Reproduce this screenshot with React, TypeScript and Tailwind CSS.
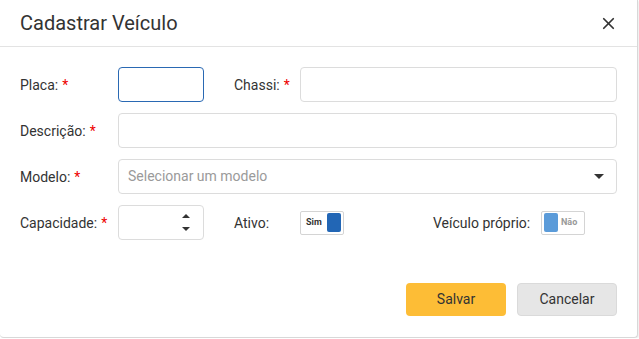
import { X } from "lucide-react";

function Label({ text, required }: { text: string; required?: boolean }) {
  return (
    <span className="text-[14px] text-[#333]">
      {text}
      {required && <span className="ml-1 text-[#e00]">*</span>}
    </span>
  );
}

function Toggle({ on, text }: { on: boolean; text: string }) {
  return (
    <div className="flex h-6 w-11 items-center rounded-[2px] border border-[#d4d4d4] bg-white px-[2px]">
      {on ? (
        <>
          <span className="flex-1 pl-[3px] text-[9px] font-bold text-[#333]">{text}</span>
          <span className="h-[19px] w-[14px] rounded-[2px] bg-[#2266b5]" />
        </>
      ) : (
        <>
          <span className="h-[19px] w-[14px] rounded-[2px] bg-[#5b9bd9]" />
          <span className="flex-1 pl-[3px] text-[9px] font-bold text-[#999]">{text}</span>
        </>
      )}
    </div>
  );
}

const base = "h-[35px] rounded-[4px] border bg-white";
const input = `${base} border-[#dcdcdc]`;

export default function App() {
  return (
    <div className="bg-white font-['Roboto',sans-serif]">
      <div className="w-[638px] h-[338px] rounded-b-[4px] border-r border-b border-[#d8d8d8] bg-white shadow-[1px_1px_2px_rgba(0,0,0,0.08)] flex flex-col">
        <div className="flex h-[47px] items-center justify-between border-b border-[#e3e3e3] pl-5 pr-[19px]">
          <h1 className="text-[20px] text-[#333]">Cadastrar Veículo</h1>
          <X className="h-[19px] w-[19px] text-[#333]" strokeWidth={2.2} />
        </div>

        <div className="flex flex-col gap-[11px] px-5 pt-5">
          <div className="flex items-center">
            <div className="w-[98px]"><Label text="Placa:" required /></div>
            <div className={`${base} w-[86px] border-[#2a69b3]`} />
            <div className="ml-[30px] w-[66px]"><Label text="Chassi:" required /></div>
            <div className={`${input} flex-1`} />
          </div>

          <div className="flex items-center">
            <div className="w-[98px]"><Label text="Descrição:" required /></div>
            <div className={`${input} flex-1`} />
          </div>

          <div className="flex items-center">
            <div className="w-[98px]"><Label text="Modelo:" required /></div>
            <div className={`${input} flex flex-1 items-center justify-between pl-[9px] pr-[12px]`}>
              <span className="text-[14px] text-[#9a9a9a]">Selecionar um modelo</span>
              <svg width="10" height="5" viewBox="0 0 10 5"><path d="M0 0h10L5 5z" fill="#333" /></svg>
            </div>
          </div>

          <div className="flex items-center">
            <div className="w-[98px]"><Label text="Capacidade:" required /></div>
            <div className={`${input} flex w-[86px] flex-col items-end justify-between py-[8px] pr-[13px]`}>
              <svg width="8" height="4" viewBox="0 0 8 4"><path d="M0 4h8L4 0z" fill="#333" /></svg>
              <svg width="8" height="4" viewBox="0 0 8 4"><path d="M0 0h8L4 4z" fill="#333" /></svg>
            </div>
            <div className="ml-[30px] w-[66px]"><Label text="Ativo:" /></div>
            <Toggle on text="Sim" />
            <div className="ml-[89px] w-[108px]"><Label text="Veículo próprio:" /></div>
            <Toggle on={false} text="Não" />
          </div>
        </div>

        <div className="mt-[43px] flex justify-end gap-[11px] px-5">
          <button className="h-[33px] w-[100px] rounded-[4px] bg-[#fdbd36] text-[14px] text-[#333]">Salvar</button>
          <button className="h-[33px] w-[100px] rounded-[4px] border border-[#dadada] bg-[#e6e6e6] text-[14px] text-[#333]">Cancelar</button>
        </div>
      </div>
    </div>
  );
}
